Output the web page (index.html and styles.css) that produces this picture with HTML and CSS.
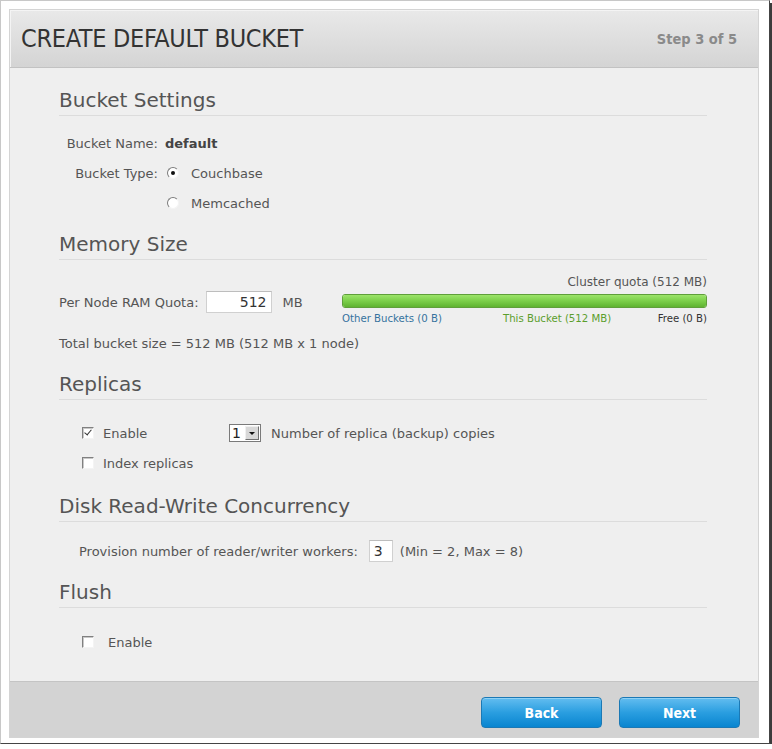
FILE: index.html
```html
<!DOCTYPE html>
<html lang="en">
<head>
    <meta charset="UTF-8">
    <meta name="viewport" content="width=device-width, initial-scale=1.0">
    <title>Create Default Bucket</title>
    <link rel="stylesheet" href="styles.css">
</head>
<body>
    <div class="frame">
        <div class="panel">
            <header class="panel-head">
                <h1>CREATE DEFAULT BUCKET</h1>
                <span class="step">Step 3 of 5</span>
            </header>

            <main class="panel-body">
                <section class="section settings">
                    <h2>Bucket Settings</h2>
                    <div class="form-row">
                        <span class="label">Bucket Name:</span>
                        <strong class="value">default</strong>
                    </div>
                    <div class="form-row">
                        <span class="label">Bucket Type:</span>
                        <span class="radio checked"></span>
                        <span class="option">Couchbase</span>
                    </div>
                    <div class="form-row">
                        <span class="label"></span>
                        <span class="radio"></span>
                        <span class="option">Memcached</span>
                    </div>
                </section>

                <section class="section memory">
                    <h2>Memory Size</h2>
                    <div class="quota-row">
                        <div class="quota-input">
                            <span>Per Node RAM Quota:</span>
                            <span class="text-box ram">512</span>
                            <span class="unit">MB</span>
                        </div>
                        <div class="quota-bar">
                            <div class="quota-title">Cluster quota (512 MB)</div>
                            <div class="bar"><div class="bar-fill"></div></div>
                            <div class="bar-legend">
                                <span class="other">Other Buckets (0 B)</span>
                                <span class="this">This Bucket (512 MB)</span>
                                <span class="free">Free (0 B)</span>
                            </div>
                        </div>
                    </div>
                    <div class="total">Total bucket size = 512 MB (512 MB x 1 node)</div>
                </section>

                <section class="section replicas">
                    <h2>Replicas</h2>
                    <div class="form-row">
                        <span class="checkbox checked"></span>
                        <span class="check-label">Enable</span>
                        <span class="select">
                            <span class="select-value">1</span>
                            <span class="select-arrow"></span>
                        </span>
                        <span>Number of replica (backup) copies</span>
                    </div>
                    <div class="form-row">
                        <span class="checkbox"></span>
                        <span>Index replicas</span>
                    </div>
                </section>

                <section class="section disk">
                    <h2>Disk Read-Write Concurrency</h2>
                    <div class="form-row">
                        <span>Provision number of reader/writer workers:</span>
                        <span class="text-box workers">3</span>
                        <span>(Min = 2, Max = 8)</span>
                    </div>
                </section>

                <section class="section flush">
                    <h2>Flush</h2>
                    <div class="form-row">
                        <span class="checkbox"></span>
                        <span class="flush-label">Enable</span>
                    </div>
                </section>
            </main>

            <footer class="panel-foot">
                <button class="btn">Back</button>
                <button class="btn">Next</button>
            </footer>
        </div>
    </div>
</body>
</html>
```

FILE: styles.css
```css
body {
    margin: 0;
    background-color: #fff;
    font-family: "DejaVu Sans", sans-serif;
    font-size: 13px;
    color: #555;
}

.frame {
    width: 755px;
    height: 730px;
    padding: 8px 5px 4px 8px;
    border: 1px solid #c8c8c8;
    border-right-color: #444;
    border-bottom-color: #444;
    box-shadow: 3px 3px 0 #3c3c3c;
    background-color: #fff;
}

.panel {
    display: flex;
    flex-direction: column;
    width: 748px;
    height: 727px;
    border: 1px solid #d4d4d4;
    background-color: #efefef;
}

.panel-head {
    display: flex;
    justify-content: space-between;
    align-items: center;
    height: 57px;
    padding: 0 21px 0 11px;
    background: linear-gradient(#e9e9e9, #d4d4d4);
    border-bottom: 1px solid #c2c2c2;
    box-shadow: inset 1px 1px 0 #f4f4f4;
}

.panel-head h1 {
    margin: 0;
    font-family: "DejaVu Sans Condensed", sans-serif;
    font-size: 25px;
    font-weight: normal;
    color: #333;
    letter-spacing: -0.3px;
}

.step {
    font-family: "DejaVu Sans Condensed", sans-serif;
    font-weight: bold;
    font-size: 14.5px;
    color: #8a8a8a;
}

.panel-body {
    flex: 1;
    padding: 20px 51px 0 49px;
}

.section h2 {
    margin: 0;
    padding-bottom: 3px;
    border-bottom: 1px solid #dcdcdc;
    font-size: 20px;
    line-height: 24px;
    font-weight: normal;
    color: #555;
}

.form-row {
    display: flex;
    align-items: center;
    height: 30px;
}

/* bucket settings */
.settings h2 {
    margin-bottom: 12px;
}

.settings .label {
    width: 99px;
    text-align: right;
    margin-right: 7px;
}

.settings .value {
    color: #444;
}

.radio {
    width: 12px;
    height: 12px;
    margin-left: 2px;
    border-radius: 50%;
    background-color: #fff;
    border: 1px solid;
    border-color: #7c7c7c #f4f4f4 #f4f4f4 #7c7c7c;
    box-sizing: border-box;
    position: relative;
}

.radio.checked::after {
    content: "";
    position: absolute;
    left: 3px;
    top: 3px;
    width: 4px;
    height: 4px;
    border-radius: 50%;
    background-color: #111;
}

.option {
    margin-left: 12px;
}

/* memory size */
.memory {
    margin-top: 14px;
}

.quota-row {
    display: flex;
    justify-content: space-between;
    margin-top: 14px;
}

.quota-input {
    display: flex;
    align-items: center;
    height: 22px;
    margin-top: 17px;
}

.text-box {
    box-sizing: border-box;
    height: 22px;
    padding: 0 4px;
    line-height: 20px;
    background-color: #fff;
    border: 1px solid #d0d0d0;
    border-top-color: #bdbdbd;
    color: #333;
    font-family: "DejaVu Sans", sans-serif;
}

.ram {
    width: 66px;
    margin-left: 7px;
    text-align: right;
    font-size: 14px;
}

.unit {
    margin-left: 11px;
}

.quota-bar {
    width: 365px;
}

.quota-title {
    text-align: right;
    font-size: 12px;
    line-height: 16px;
}

.bar {
    height: 14px;
    margin-top: 4px;
    border-radius: 3px;
    border: 1px solid #5f9f3a;
    box-sizing: border-box;
    background-color: #74c946;
    overflow: hidden;
}

.bar-fill {
    height: 100%;
    background: linear-gradient(#9ce46a, #7ed14c 45%, #5fb330);
}

.bar-legend {
    display: flex;
    margin-top: 4px;
    font-family: "DejaVu Sans Condensed", sans-serif;
    font-size: 11.3px;
    line-height: 14px;
}

.bar-legend .other {
    color: #36739e;
}

.bar-legend .this {
    color: #5b9e2c;
    margin-left: 61px;
}

.bar-legend .free {
    color: #333;
    margin-left: auto;
}

.total {
    margin-top: 10px;
    line-height: 16px;
}

/* replicas */
.replicas {
    margin-top: 20px;
}

.replicas h2 {
    margin-bottom: 18px;
}

.replicas .form-row {
    padding-left: 23px;
}

.checkbox {
    box-sizing: border-box;
    width: 12px;
    height: 12px;
    margin-right: 9px;
    background-color: #fff;
    border: 1px solid;
    border-color: #808080 #f4f4f4 #f4f4f4 #808080;
    box-shadow: inset 1px 1px 0 #c8c8c8;
    position: relative;
}

.checkbox.checked::after {
    content: "";
    position: absolute;
    left: 3px;
    top: 0;
    width: 3px;
    height: 6px;
    border: solid #333;
    border-width: 0 1.5px 1.5px 0;
    transform: rotate(40deg);
}

.check-label {
    width: 126px;
}

.select {
    display: flex;
    align-items: center;
    box-sizing: border-box;
    width: 32px;
    height: 18px;
    margin-right: 10px;
    padding: 1px;
    background-color: #fff;
    border: 1px solid #7a7a7a;
    color: #222;
    font-size: 14px;
}

.select-value {
    flex: 1;
    padding-left: 1px;
}

.select-arrow {
    position: relative;
    width: 14px;
    height: 14px;
    box-sizing: border-box;
    background-color: #d8d8d8;
    border: 1px solid;
    border-color: #f0f0f0 #707070 #707070 #f0f0f0;
}

.select-arrow::after {
    content: "";
    position: absolute;
    left: 3px;
    top: 5px;
    border-left: 3px solid transparent;
    border-right: 3px solid transparent;
    border-top: 3px solid #111;
}

/* disk */
.disk {
    margin-top: 16px;
}

.disk h2 {
    margin-bottom: 14px;
}

.disk .form-row {
    padding-left: 20px;
}

.workers {
    width: 24px;
    margin: 0 7px 0 11px;
    font-size: 14px;
}

/* flush */
.flush {
    margin-top: 14px;
}

.flush h2 {
    margin-bottom: 19px;
}

.flush .form-row {
    padding-left: 23px;
}

.flush-label {
    margin-left: 5px;
}

/* footer */
.panel-foot {
    display: flex;
    justify-content: flex-end;
    align-items: flex-start;
    gap: 17px;
    height: 56px;
    padding: 15px 18px 0 0;
    box-sizing: border-box;
    background-color: #d3d3d3;
    border-top: 1px solid #c4c4c4;
}

.btn {
    width: 121px;
    height: 31px;
    border: 1px solid #1b79b5;
    border-radius: 4px;
    background: linear-gradient(#63bdf0, #2a9ee0 50%, #0985d0);
    box-shadow: inset 0 1px 0 #8fd1f5;
    color: #fff;
    font-family: "DejaVu Sans Condensed", sans-serif;
    font-weight: bold;
    font-size: 14px;
    cursor: pointer;
}
```
